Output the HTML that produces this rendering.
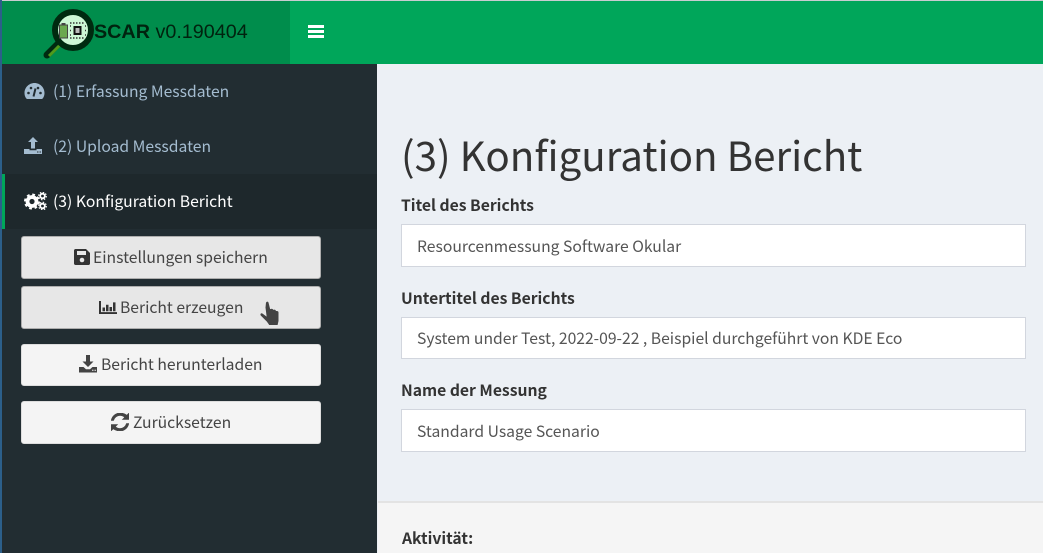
<!DOCTYPE html>
<html><head><meta charset="utf-8"><style>
html,body{margin:0;padding:0;width:1043px;height:553px;overflow:hidden;background:#ecf0f5}
body{position:relative;font-family:"Noto Sans CJK JP","Noto Sans CJK SC","Liberation Sans",sans-serif;font-size:15.7px;color:#333}
.a{position:absolute;white-space:nowrap;line-height:22px}
.btn{position:absolute;left:21px;width:300px;box-sizing:border-box;border-radius:3px;border:1px solid #ddd;background:#f4f4f4;color:#444}
.btn.d{background:#e7e7e7;border-color:#adadad}
.in{position:absolute;left:401px;width:625px;height:43px;box-sizing:border-box;background:#fff;border:1px solid #d2d6de}
.lb{font-weight:700;color:#333}
.nav{color:#a4bcd0}
svg{position:absolute}
</style></head><body>
<div style="position:absolute;left:0;top:0;width:1043px;height:1px;background:#c8cdd0"></div>
<div style="position:absolute;left:2px;top:1px;width:1041px;height:63px;background:#00a65a"></div>
<div style="position:absolute;left:2px;top:1px;width:288px;height:63px;background:#008d4c"></div>
<div style="position:absolute;left:0;top:0;width:2px;height:553px;background:#2c5f8a"></div>
<div style="position:absolute;left:2px;top:64px;width:375px;height:489px;background:#222d32"></div>
<div style="position:absolute;left:2px;top:174px;width:375px;height:55px;background:#1e282c"></div>
<div style="position:absolute;left:2px;top:174px;width:3px;height:55px;background:#00a65a"></div>

<svg style="left:40px;top:6px" width="60" height="56" viewBox="0 0 60 56">
<path d="M7 49L20 36" stroke="#002a10" stroke-width="7" stroke-linecap="round"/>
<path d="M9 50L20 39" stroke="#4f9a1c" stroke-width="3"/>
<circle cx="33" cy="24" r="18" fill="#cdf7d5" stroke="#002a10" stroke-width="6"/>
<rect x="19.500" y="19" width="8" height="13" fill="#6aa84f" stroke="#444" stroke-width="1"/>
<rect x="21.500" y="17" width="4" height="2" fill="#444"/>
<rect x="33.500" y="20" width="8" height="9" fill="#111"/>
<rect x="35.500" y="22" width="4" height="5" fill="#bbb"/>
<path d="M30 17h15M30 32h15M31 20h-1M31 24.500h-1M31 29h-1M45 20h1M45 24.500h1M45 29h1" stroke="#333" stroke-width="1.500" stroke-dasharray="1.500 1.500"/>
</svg>
<div class="a" style="left:94px;top:21px;font-family:'Liberation Sans',sans-serif;font-size:19.75px;color:#00230f"><b>SCAR</b> v0.190404</div>
<svg style="left:308px;top:25px" width="16" height="14" viewBox="0 0 16 14"><path d="M0 0h16v3H0zM0 5h16v3H0zM0 10h16v3H0z" fill="#fff"/></svg>

<svg style="left:24px;top:83px" width="21" height="16" viewBox="0 1 21 16"><path d="M10.500 1C5 1 .5 5.500.5 11c0 2 .6 3.800 1.600 5.300.3.400.7.700 1.200.7h14.400c.5 0 .9-.3 1.200-.7 1-1.500 1.600-3.300 1.600-5.300 0-5.500-4.500-10-10-10z" fill="#a4bcd0"/><circle cx="4.500" cy="11" r="1.300" fill="#222d32"/><circle cx="7" cy="6" r="1.300" fill="#222d32"/><circle cx="16.500" cy="11" r="1.300" fill="#222d32"/><circle cx="14" cy="6" r="1.300" fill="#222d32"/><path d="M9.500 14.500L11.500 6.500" stroke="#222d32" stroke-width="2"/></svg>
<div class="a nav" style="left:53px;top:80px">(1) Erfassung Messdaten</div>
<svg style="left:24px;top:137px" width="18" height="18" viewBox="0 0 18 18"><path d="M9 0l5 5h-3v6.500H7V5H4zM0 12h5.500v1.200h7V12H18v5H0z" fill="#a4bcd0"/><path d="M13 15h1.500M15.500 15H17" stroke="#222d32" stroke-width="1"/></svg>
<div class="a nav" style="left:53px;top:135px">(2) Upload Messdaten</div>
<svg style="left:24px;top:192px" width="23" height="18" viewBox="0 0 23 18"><circle cx="8" cy="9.500" r="4.500" fill="none" stroke="#fff" stroke-width="3.800"/><circle cx="8" cy="9.500" r="7" fill="none" stroke="#fff" stroke-width="2" stroke-dasharray="2.800 2.700"/><circle cx="18.500" cy="4" r="2.300" fill="none" stroke="#fff" stroke-width="1.800"/><circle cx="18.500" cy="14" r="2.300" fill="none" stroke="#fff" stroke-width="1.800"/><circle cx="18.500" cy="4" r="3.800" fill="none" stroke="#fff" stroke-width="1.200" stroke-dasharray="1.500 1.500"/><circle cx="18.500" cy="14" r="3.800" fill="none" stroke="#fff" stroke-width="1.200" stroke-dasharray="1.500 1.500"/></svg>
<div class="a" style="left:53px;top:190px;color:#fff">(3) Konfiguration Bericht</div>

<div class="btn d" style="top:236px;height:43px"></div>
<svg style="left:74px;top:249px" width="16" height="16" viewBox="0 0 16 16"><path d="M1.500 0h10.500L16 4v10.500c0 .8-.7 1.500-1.500 1.500h-13C.7 16 0 15.300 0 14.500v-13C0 .7.700 0 1.500 0z" fill="#333"/><rect x="3" y="2" width="9" height="4" fill="#e7e7e7"/><circle cx="8" cy="11" r="2.300" fill="#e7e7e7"/></svg>
<div class="a" style="left:93px;top:246px;color:#444">Einstellungen speichern</div>

<div class="btn d" style="top:286px;height:43px"></div>
<svg style="left:99px;top:301px" width="18" height="13" viewBox="0 0 18 14" preserveAspectRatio="none"><path d="M0 0h2v12H18V14H0z" fill="#333"/><path d="M3.500 7h2.500v4h-2.500zM7 4h2.500v7H7zM10.500 6.500h2.500v4.500h-2.500zM14 1.500h2.500V11h-2.500z" fill="#333"/></svg>
<div class="a" style="left:120px;top:296px;color:#444">Bericht erzeugen</div>
<svg style="left:258px;top:300px" width="24" height="27" viewBox="0 0 24 27"><path d="M7.500 2.500C8.500 .5 10.500 .8 11 2.500L12.500 8.500C13.800 8 15 8.300 15.500 9.300 16.800 9 18 9.500 18.300 10.500 19.800 10.300 21 11 21 12.500V21L20 25.500H11L8.500 22 2.500 16C1 14.500 2.500 12 4.500 13L8 15.500 7 7.500z" fill="#444" stroke="#e8e8e8" stroke-width="1"/></svg>

<div class="btn" style="top:344px;height:42px"></div>
<svg style="left:79px;top:355px" width="18" height="18" viewBox="0 0 18 18"><path d="M7 0h4v6.500h3.500L9 12 3.500 6.500H7zM0 12h4.500l2.500 2.300h4L13.500 12H18v5.500H0z" fill="#444"/><path d="M13 15.200h1.500M15.500 15.200H17" stroke="#f4f4f4" stroke-width="1"/></svg>
<div class="a" style="left:101px;top:353px;color:#444">Bericht herunterladen</div>

<div class="btn" style="top:401px;height:43px"></div>
<svg style="left:111px;top:413px" width="18" height="18" viewBox="0 0 18 18"><path d="M2.500 7.500C3.300 4.500 6 2.500 9 2.500c1.800 0 3.500.7 4.700 1.900L11.500 6.500H18V0l-2.200 2.200C14 .8 11.700 0 9 0 4.700 0 1 3 .2 7.500zM15.500 10.500c-.8 3-3.500 5-6.500 5-1.800 0-3.500-.7-4.700-1.900l2.200-2.100H0V18l2.200-2.200C4 17.200 6.300 18 9 18c4.300 0 8-3 8.800-7.500z" fill="#444" stroke="#444" stroke-width=".6"/></svg>
<div class="a" style="left:133px;top:411px;color:#444">Zurücksetzen</div>

<div class="a" style="left:401px;top:128px;font-size:40.3px;line-height:52px;color:#333">(3) Konfiguration Bericht</div>
<div class="a lb" style="left:401px;top:194px">Titel des Berichts</div>
<div class="in" style="top:224px"></div>
<div class="a" style="left:417px;top:235px;color:#555">Resourcenmessung Software Okular</div>
<div class="a lb" style="left:401px;top:287px">Untertitel des Berichts</div>
<div class="in" style="top:317px;height:42px"></div>
<div class="a" style="left:417px;top:327px;color:#555">System under Test, 2022-09-22 , Beispiel durchgeführt von KDE Eco</div>
<div class="a lb" style="left:401px;top:379px">Name der Messung</div>
<div class="in" style="top:409px"></div>
<div class="a" style="left:417px;top:420px;color:#555">Standard Usage Scenario</div>

<div style="position:absolute;left:378px;top:501px;width:665px;height:52px;background:#f5f5f5;border-top:2px solid #e3e3e3;box-sizing:border-box"></div>
<div class="a lb" style="left:402px;top:527px">Aktivität:</div>
</body></html>
